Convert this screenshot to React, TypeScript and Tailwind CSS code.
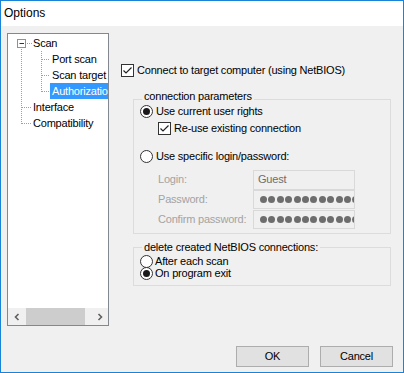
import React from "react";

const font = { fontFamily: '"Liberation Sans", Arial, sans-serif' };

function Check() {
  return (
    <div className="w-[13px] h-[13px] border border-[#333333] bg-white flex items-center justify-center shrink-0">
      <svg width="11" height="11" viewBox="0 0 11 11">
        <path d="M1.5 5.5 L4 8 L9.5 2.5" stroke="#222" strokeWidth="1.2" fill="none" />
      </svg>
    </div>
  );
}

function Radio({ on }: { on?: boolean }) {
  return (
    <div className="w-[13px] h-[13px] rounded-full border border-[#333333] bg-white flex items-center justify-center shrink-0">
      {on && <div className="w-[7px] h-[7px] rounded-full bg-[#1a1a1a]" />}
    </div>
  );
}

function Dots() {
  return (
    <div className="flex items-center gap-[1.4px] pl-[6px] overflow-hidden">
      {Array.from({ length: 14 }).map((_, i) => (
        <div key={i} className="w-[7px] h-[7px] rounded-full bg-[#6d6d6d] shrink-0" />
      ))}
    </div>
  );
}

export default function App() {
  return (
    <div
      className="w-[404px] h-[373px] border border-[#1883d7] flex flex-col text-[11px] tracking-[-0.2px] text-black leading-[13px]"
      style={font}
    >
      <div className="h-[25px] bg-white flex items-center pl-[3px] text-[12px] tracking-normal">
        Options
      </div>
      <div className="flex-1 bg-[#f0f0f0] flex flex-col">
        <div className="flex flex-1">
          {/* tree */}
          <div className="ml-[6px] mt-[7px] w-[102px] h-[293px] border border-[#828790] bg-white flex flex-col relative">
            <svg className="absolute left-0 top-0" width="100" height="100">
              <rect x="9.5" y="5.5" width="8" height="8" fill="white" stroke="#919191" />
              <line x1="11.5" y1="9.5" x2="16" y2="9.5" stroke="#333" />
              <g stroke="#a0a0a0" strokeDasharray="1 1">
                <line x1="13.5" y1="15" x2="13.5" y2="90" />
                <line x1="19" y1="9.5" x2="24" y2="9.5" />
                <line x1="14" y1="73.5" x2="24" y2="73.5" />
                <line x1="14" y1="89.5" x2="24" y2="89.5" />
                <line x1="33.5" y1="17" x2="33.5" y2="58" />
                <line x1="34" y1="25.5" x2="42" y2="25.5" />
                <line x1="34" y1="41.5" x2="42" y2="41.5" />
                <line x1="34" y1="57.5" x2="42" y2="57.5" />
              </g>
            </svg>
            <div className="flex-1 pt-[1px] overflow-hidden whitespace-nowrap">
              <div className="h-[16px] flex items-center pl-[25px]">Scan</div>
              <div className="h-[16px] flex items-center pl-[44px]">Port scan</div>
              <div className="h-[16px] flex items-center pl-[44px]">Scan target</div>
              <div className="h-[16px] flex items-center ml-[42px] pl-[2px] bg-[#3399ff] text-white">
                Authorization
              </div>
              <div className="h-[16px] flex items-center pl-[25px]">Interface</div>
              <div className="h-[16px] flex items-center pl-[25px]">Compatibility</div>
            </div>
            <div className="h-[17px] bg-[#f0f0f0] flex items-center">
              <div className="w-[17px] h-[17px] flex items-center justify-center">
                <svg width="8" height="8" viewBox="0 0 8 8">
                  <path d="M5.5 1 L2.5 4 L5.5 7" stroke="#606060" strokeWidth="1.6" fill="none" />
                </svg>
              </div>
              <div className="ml-[1px] w-[59px] h-[17px] bg-[#cdcdcd]" />
              <div className="flex-1" />
              <div className="w-[17px] h-[17px] flex items-center justify-center">
                <svg width="8" height="8" viewBox="0 0 8 8">
                  <path d="M2.5 1 L5.5 4 L2.5 7" stroke="#606060" strokeWidth="1.6" fill="none" />
                </svg>
              </div>
            </div>
          </div>

          {/* right content */}
          <div className="ml-[12px] mt-[38px] flex flex-col">
            <div className="flex items-center h-[13px]">
              <Check />
              <span className="ml-[3px] whitespace-nowrap">Connect to target computer (using NetBIOS)</span>
            </div>

            <div className="relative ml-[12px] mt-[22px] w-[258px] h-[135px] border border-[#dcdcdc] pl-[6px] pt-[5px] flex flex-col">
              <span className="absolute left-[8px] -top-[10px] px-[2px] bg-[#f0f0f0] whitespace-nowrap">
                connection parameters
              </span>
              <div className="flex items-center h-[13px]">
                <Radio on />
                <span className="ml-[3px]">Use current user rights</span>
              </div>
              <div className="flex items-center h-[13px] mt-[4px] ml-[18px]">
                <Check />
                <span className="ml-[3px]">Re-use existing connection</span>
              </div>
              <div className="flex items-center h-[13px] mt-[15px]">
                <Radio />
                <span className="ml-[3px]">Use specific login/password:</span>
              </div>
              <div className="mt-[7px] ml-[18px] flex flex-col gap-[1px] text-[#a3a3a3]">
                <div className="flex items-center h-[19px]">
                  <span className="w-[95px]">Login:</span>
                  <div className="w-[102px] h-[20px] border border-[#d9d9d9] flex items-center pl-[4px] text-[#6d6d6d]">
                    Guest
                  </div>
                </div>
                <div className="flex items-center h-[19px]">
                  <span className="w-[95px]">Password:</span>
                  <div className="w-[102px] h-[19px] border border-[#d9d9d9] flex items-center overflow-hidden">
                    <Dots />
                  </div>
                </div>
                <div className="flex items-center h-[19px]">
                  <span className="w-[95px]">Confirm password:</span>
                  <div className="w-[102px] h-[19px] border border-[#d9d9d9] flex items-center overflow-hidden">
                    <Dots />
                  </div>
                </div>
              </div>
            </div>

            <div className="relative ml-[12px] mt-[13px] w-[258px] h-[39px] border border-[#dcdcdc] pl-[6px] pt-[7px] flex flex-col">
              <div className="flex items-center h-[12px]">
                <Radio />
                <span className="ml-[2px]">After each scan</span>
              </div>
              <div className="flex items-center h-[12px]">
                <Radio on />
                <span className="ml-[2px]">On program exit</span>
              </div>
              <span className="absolute left-[8px] -top-[7px] px-[2px] bg-[#f0f0f0] whitespace-nowrap leading-[12px]">
                delete created NetBIOS connections:
              </span>
            </div>
          </div>
        </div>

        <div className="flex justify-end gap-[11px] pr-[10px] pb-[5px]">
          <button className="w-[73px] h-[21px] border border-[#adadad] bg-[#e1e1e1] flex items-center justify-center">
            OK
          </button>
          <button className="w-[73px] h-[21px] border border-[#adadad] bg-[#e1e1e1] flex items-center justify-center">
            Cancel
          </button>
        </div>
      </div>
    </div>
  );
}
